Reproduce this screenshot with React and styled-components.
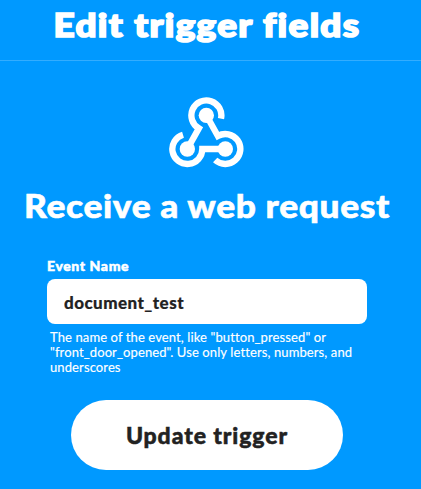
import React from "react";
import styled, { createGlobalStyle } from "styled-components";

const GlobalStyle = createGlobalStyle`
  * { box-sizing: border-box; }
  body {
    margin: 0;
    background: #0099ff;
    font-family: Lato, "Open Sans", sans-serif;
  }
`;

const Page = styled.main`
  width: 100%;
  height: 489px;
  overflow: hidden;
  background: #0099ff;
  color: #fff;
`;

const Header = styled.header`
  height: 61px;
  padding-top: 5px;
  padding-right: 7px;
  border-bottom: 1px solid #33adff;
`;

const Title = styled.h1`
  margin: 0;
  text-align: center;
  white-space: nowrap;
  font-size: 32px;
  font-weight: 900;
  line-height: 40px;
  letter-spacing: 1.2px;
  transform: scaleX(1.15);
  -webkit-text-stroke: 1.7px #fff;
`;

const Content = styled.section`
  display: flex;
  flex-direction: column;
  align-items: center;
  padding: 36px 7px 0 0;
`;

const WebhookIcon = styled.svg`
  display: block;
  width: 75px;
  height: 71px;
  margin-right: 1px;
`;

const ServiceName = styled.h2`
  margin: 17px 0 0;
  white-space: nowrap;
  font-size: 33px;
  font-weight: 900;
  line-height: 40px;
  letter-spacing: 0.6px;
  transform: scaleX(1.07);
  -webkit-text-stroke: 0.6px #fff;
`;

const Form = styled.form`
  display: flex;
  flex-direction: column;
  align-items: center;
  margin-top: 32px;
`;

const Field = styled.div`
  width: 320px;
`;

const Label = styled.label`
  display: block;
  height: 22px;
  font-size: 14px;
  font-weight: 900;
  line-height: 18px;
  letter-spacing: 0.6px;
  -webkit-text-stroke: 0.5px #fff;
`;

const Input = styled.input`
  display: block;
  width: 100%;
  height: 45px;
  padding: 1px 17px 0 17px;
  border: 0;
  border-radius: 8px;
  outline: 0;
  background: #fff;
  color: #222;
  font-family: inherit;
  font-size: 17px;
  font-weight: 900;
  letter-spacing: 0.45px;
  -webkit-text-stroke: 0.2px #222;
`;

const Help = styled.p`
  margin: 6px 0 0 3px;
  white-space: nowrap;
  font-size: 13px;
  line-height: 15px;
  letter-spacing: 0.11px;
  -webkit-text-stroke: 0.15px #fff;
`;

const SubmitButton = styled.button`
  width: 272px;
  height: 70px;
  margin-top: 25px;
  padding: 0;
  border: 0;
  border-radius: 35px;
  background: #fff;
  color: #222;
  font-family: inherit;
  font-size: 23px;
  font-weight: 900;
  letter-spacing: 0.9px;
  -webkit-text-stroke: 0.5px #222;
`;

export default function App() {
  return (
    <Page>
      <GlobalStyle />
      <Header>
        <Title>Edit trigger fields</Title>
      </Header>
      <Content>
        <WebhookIcon viewBox="27 21 225 213" aria-hidden="true">
          <g fill="none" stroke="#fff" strokeWidth="19">
            <path d="M82 177 L116.5 115 A45 45 0 1 1 183 86" />
            <path d="M139 76 L173.5 138 A45 45 0 1 1 165.5 210" />
            <path d="M196 177 H127 A45 45 0 1 1 69 134" />
          </g>
          <g fill="#fff">
            <circle cx="139" cy="76" r="23" />
            <circle cx="82" cy="177" r="23" />
            <circle cx="196" cy="177" r="23" />
          </g>
        </WebhookIcon>
        <ServiceName>Receive a web request</ServiceName>
        <Form onSubmit={(e) => e.preventDefault()}>
          <Field>
            <Label htmlFor="event-name">Event Name</Label>
            <Input id="event-name" defaultValue="document_test" spellCheck={false} />
            <Help>
              The name of the event, like "button_pressed" or
              <br />
              "front_door_opened". Use only letters, numbers, and
              <br />
              underscores
            </Help>
          </Field>
          <SubmitButton type="submit">Update trigger</SubmitButton>
        </Form>
      </Content>
    </Page>
  );
}
